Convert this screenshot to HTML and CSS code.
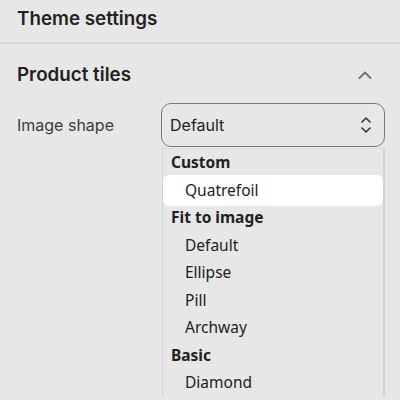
FILE: index.html
```html
<!DOCTYPE html>
<html>
<head>
    <title>Theme settings</title>
    <link rel="stylesheet" href="styles.css">
</head>
<body>
    <div class="panel">
        <div class="panel-title">Theme settings</div>
        <div class="section">
            <div class="section-head">
                <span>Product tiles</span>
                <svg class="chev" width="14" height="8" viewBox="0 0 14 8"><path d="M1.5 7 L7 1.5 L12.5 7" fill="none" stroke="#707070" stroke-width="1.8" stroke-linecap="round" stroke-linejoin="round"/></svg>
            </div>
            <div class="field">
                <label class="field-label">Image shape</label>
                <div class="select-wrap">
                    <div class="select">
                        <span>Default</span>
                        <svg width="12" height="20" viewBox="0 0 12 20"><path d="M2 7 L6 3 L10 7 M2 13 L6 17 L10 13" fill="none" stroke="#333" stroke-width="1.6" stroke-linecap="round" stroke-linejoin="round"/></svg>
                    </div>
                    <ul class="options">
                        <li class="group">Custom</li>
                        <li class="opt active">Quatrefoil</li>
                        <li class="group">Fit to image</li>
                        <li class="opt">Default</li>
                        <li class="opt">Ellipse</li>
                        <li class="opt">Pill</li>
                        <li class="opt">Archway</li>
                        <li class="group">Basic</li>
                        <li class="opt">Diamond</li>
                    </ul>
                </div>
            </div>
        </div>
    </div>
</body>
</html>
```

FILE: styles.css
```css
html, body {
    margin: 0;
    height: 100%;
    overflow: hidden;
}

body {
    background: #e7e7e7;
    color: #222;
    font-family: Inter, "Liberation Sans", sans-serif;
}

.panel-title {
    height: 44px;
    padding: 0 17px;
    font-size: 18.8px;
    font-weight: 600;
    line-height: 38px;
    border-bottom: 2px solid #d9d9d9;
    box-sizing: border-box;
}

/* section */
.section {
    padding: 2px 15px 0 17px;
}

.section-head {
    display: flex;
    justify-content: space-between;
    align-items: center;
    height: 57px;
    font-size: 18.8px;
    font-weight: 600;
}

.chev {
    margin-right: 13px;
}

.field {
    display: flex;
    align-items: flex-start;
}

.field-label {
    width: 144px;
    line-height: 44px;
    font-size: 16px;
    color: #3c3c3c;
}

.select-wrap {
    flex: 1;
    position: relative;
}

.select {
    height: 44px;
    box-sizing: border-box;
    border: 1px solid #7a7a7a;
    border-radius: 10px;
    display: flex;
    align-items: center;
    justify-content: space-between;
    padding: 0 12px 0 8px;
    font-size: 16px;
    color: #222;
}

/* dropdown list */
.options {
    position: absolute;
    top: 45px;
    left: 1px;
    right: 0;
    margin: 0;
    padding: 0;
    list-style: none;
    border-left: 1px solid #d2d2d2;
    border-right: 2px solid #d2d2d2;
    border-top: 1px solid #dcdcdc;
    font-family: "Noto Sans", sans-serif;
    font-size: 15.5px;
    color: #222;
}

.options li {
    height: 27.5px;
    line-height: 27.5px;
}

.group {
    font-weight: 700;
    padding-left: 8px;
}

.opt {
    padding-left: 22px;
}

.opt.active {
    background: #fff;
    border-radius: 6px;
    box-shadow: 0 -2px 0 #fff, 0 2px 0 #fff;
}
```
